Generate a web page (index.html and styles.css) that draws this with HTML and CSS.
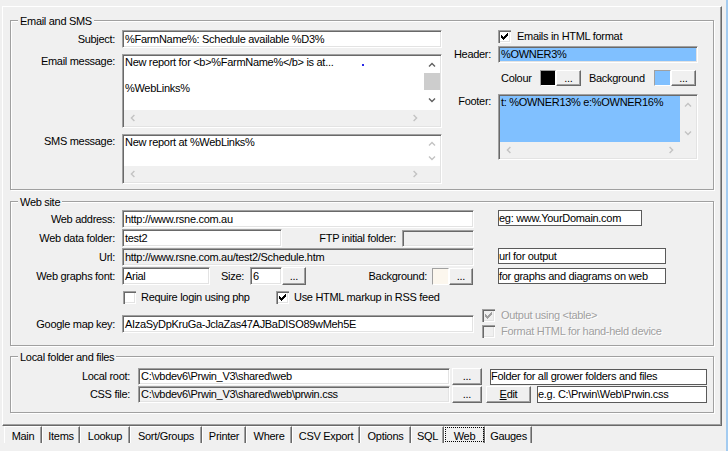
FILE: index.html
```html
<!DOCTYPE html>
<html>
<head>
<meta charset="utf-8">
<title>Web settings</title>
<link rel="stylesheet" href="styles.css">
</head>
<body>
<svg class="defs" width="0" height="0" aria-hidden="true">
  <defs>
    <symbol id="au" viewBox="0 0 8 5"><path d="M1 4.4L4 1.4L7 4.4" fill="none" stroke="currentColor" stroke-width="1.4"/></symbol>
    <symbol id="ad" viewBox="0 0 8 5"><path d="M1 0.6L4 3.6L7 0.6" fill="none" stroke="currentColor" stroke-width="1.4"/></symbol>
    <symbol id="al" viewBox="0 0 5 8"><path d="M4.4 1L1.4 4L4.4 7" fill="none" stroke="currentColor" stroke-width="1.4"/></symbol>
    <symbol id="ar" viewBox="0 0 5 8"><path d="M0.6 1L3.6 4L0.6 7" fill="none" stroke="currentColor" stroke-width="1.4"/></symbol>
    <symbol id="chk" viewBox="0 0 13 13"><path d="M3 5h1v3h-1z M4 6h1v3h-1z M5 7h1v3h-1z M6 6h1v3h-1z M7 5h1v3h-1z M8 4h1v3h-1z M9 3h1v3h-1z" fill="currentColor"/></symbol>
  </defs>
</svg>
<div class="window">
  <div class="panel">

    <div class="group g-email">
      <span class="legend">Email and SMS</span>
      <div class="col email-left">
        <div class="row">
          <span class="lbl">Subject:</span>
          <div class="field w320 h18">%FarmName%: Schedule available %D3%</div>
        </div>
        <div class="row top mt6">
          <span class="lbl pt1">Email message:</span>
          <div class="memo w320 h74">
            <div class="memo-text">New report for &lt;b&gt;%FarmName%&lt;/b&gt; is at...<br><br>%WebLinks%<i class="dot"></i></div>
            <div class="vscroll">
              <span class="sb"><svg class="ah"><use href="#au"/></svg></span>
              <span class="thumb"></span>
              <span class="sb grow"><svg class="ah"><use href="#ad"/></svg></span>
            </div>
            <div class="hscroll">
              <span class="sbh off"><svg class="av"><use href="#al"/></svg></span>
              <span class="grow"></span>
              <span class="sbh off"><svg class="av"><use href="#ar"/></svg></span>
            </div>
            <div class="corner"></div>
          </div>
        </div>
        <div class="row top mt6">
          <span class="lbl pt1">SMS message:</span>
          <div class="memo w320 h50">
            <div class="memo-text">New report at %WebLinks%</div>
            <div class="vscroll">
              <span class="sb off grow"><svg class="ah"><use href="#au"/></svg></span>
              <span class="sb off grow"><svg class="ah"><use href="#ad"/></svg></span>
            </div>
            <div class="hscroll">
              <span class="sbh off"><svg class="av"><use href="#al"/></svg></span>
              <span class="grow"></span>
              <span class="sbh off"><svg class="av"><use href="#ar"/></svg></span>
            </div>
            <div class="corner"></div>
          </div>
        </div>
      </div>

      <div class="col email-right">
        <div class="row h13">
          <span class="lbl2"></span>
          <span class="cb"><svg class="ck"><use href="#chk"/></svg></span>
          <span class="cbt m6">Emails in HTML format</span>
        </div>
        <div class="row mt3">
          <span class="lbl2">Header:</span>
          <div class="field blue w200 h17">%OWNER3%</div>
        </div>
        <div class="row mt7 h16">
          <span class="lbl2"></span>
          <span class="clab">Colour</span>
          <span class="swatch black w16"></span>
          <span class="btn w25 h16">...</span>
          <span class="blab">Background</span>
          <span class="swatch lblue w17"></span>
          <span class="btn w25 h16">...</span>
        </div>
        <div class="row top mt8">
          <span class="lbl2 pt1">Footer:</span>
          <div class="memo w200 h66">
            <div class="memo-text blue">t: %OWNER13% e:%OWNER16%</div>
            <div class="vscroll gray">
              <span class="sb off"><svg class="ah"><use href="#au"/></svg></span>
              <span class="grow"></span>
              <span class="sb off"><svg class="ah"><use href="#ad"/></svg></span>
            </div>
            <div class="hscroll">
              <span class="sbh off"><svg class="av"><use href="#al"/></svg></span>
              <span class="grow"></span>
              <span class="sbh off"><svg class="av"><use href="#ar"/></svg></span>
            </div>
            <div class="corner"></div>
          </div>
        </div>
      </div>
    </div>

    <div class="group g-web">
      <span class="legend">Web site</span>
      <div class="col web-left">
        <div class="row h18">
          <span class="lbl">Web address:</span>
          <div class="field w352 h18">http://www.rsne.com.au</div>
        </div>
        <div class="row h18 mt1">
          <span class="lbl">Web data folder:</span>
          <div class="field w160 h18">test2</div>
          <span class="ftp">FTP initial folder:</span>
          <div class="field dis w72 h17"></div>
        </div>
        <div class="row h18 mt1">
          <span class="lbl">Url:</span>
          <div class="field dis w352 h18">http://www.rsne.com.au/test2/Schedule.htm</div>
        </div>
        <div class="row h18 mt1">
          <span class="lbl">Web graphs font:</span>
          <div class="field w88 h18">Arial</div>
          <span class="size">Size:</span>
          <div class="field w32 h18">6</div>
          <span class="btn w24 h18">...</span>
          <span class="bg2">Background:</span>
          <span class="swatch cream w17 h17"></span>
          <span class="btn w24 h17">...</span>
        </div>
        <div class="row h13 mt6">
          <span class="lbl"></span>
          <span class="chk-item">
            <span class="cb"></span><span class="cbt">Require login using php</span>
          </span>
          <span class="chk-item">
            <span class="cb"><svg class="ck"><use href="#chk"/></svg></span><span class="cbt">Use HTML markup in RSS feed</span>
          </span>
        </div>
        <div class="row h18 mt11">
          <span class="lbl">Google map key:</span>
          <div class="field w352 h18">AIzaSyDpKruGa-JclaZas47AJBaDISO89wMeh5E</div>
        </div>
      </div>
      <div class="col web-right">
        <div class="box w144 h16">eg: www.YourDomain.com</div>
        <div class="box w168 h16 mt22">url for output</div>
        <div class="box w168 h16 mt4">for graphs and diagrams on web</div>
        <div class="row h13 mt25 off-row">
          <span class="cb dis"><svg class="ck"><use href="#chk"/></svg></span>
          <span class="cbt m6">Output using &lt;table&gt;</span>
        </div>
        <div class="row h13 mt3 off-row">
          <span class="cb dis"></span>
          <span class="cbt m6">Format HTML for hand-held device</span>
        </div>
      </div>
    </div>

    <div class="group g-local">
      <span class="legend">Local folder and files</span>
      <div class="row h17">
        <span class="lbl3">Local root:</span>
        <div class="field w312 h17">C:\vbdev6\Prwin_V3\shared\web</div>
        <span class="btn w30 h17 ml2">...</span>
        <div class="box w217 h16 ml8">Folder for all grower folders and files</div>
      </div>
      <div class="row h17 mt1">
        <span class="lbl3">CSS file:</span>
        <div class="field dis w312 h17">C:\vbdev6\Prwin_V3\shared\web\prwin.css</div>
        <span class="btn w30 h17 ml2">...</span>
        <span class="btn w45 h17 ml4"><u>E</u>dit</span>
        <div class="box w170 h17 ml6">e.g. C:\Prwin\Web\Prwin.css</div>
      </div>
    </div>

  </div>

  <div class="tabs">
    <span class="tab">Main</span>
    <span class="tab">Items</span>
    <span class="tab">Lookup</span>
    <span class="tab">Sort/Groups</span>
    <span class="tab">Printer</span>
    <span class="tab">Where</span>
    <span class="tab">CSV Export</span>
    <span class="tab">Options</span>
    <span class="tab">SQL</span>
    <span class="tab sel">Web</span>
    <span class="tab">Gauges</span>
  </div>
</div>
</body>
</html>
```

FILE: styles.css
```css
* { box-sizing: border-box; margin: 0; padding: 0; }
html, body { width: 728px; height: 451px; overflow: hidden; }
body {
  background: #a3cbf0;
  font-family: "Liberation Sans", Arial, sans-serif;
  font-size: 11px;
  line-height: 13px;
  letter-spacing: -0.3px;
  color: #000;
}
.defs { position: absolute; width: 0; height: 0; overflow: hidden; }

.window { width: 726px; height: 451px; background: #f0f0f0; padding-top: 6px; }
.panel {
  margin-left: 2px;
  width: 720px;
  height: 420px;
  border: 1px solid;
  border-color: #fff #696969 #696969 #fff;
  box-shadow: inset -1px -1px 0 #a0a0a0;
  padding: 13px 0 0 7px;
}

/* group boxes */
.group {
  position: relative;
  width: 704px;
  border: 1px solid #a0a0a0;
  box-shadow: inset 1px 1px 0 #fff, 1px 1px 0 #fff;
  display: flex;
  align-items: flex-start;
}
.g-email { height: 170px; padding-top: 9px; }
.g-web { height: 145px; margin-top: 11px; padding-top: 8px; }
.g-local { height: 57px; margin-top: 10px; padding-top: 11px; flex-direction: column; }
.legend {
  position: absolute;
  top: -6px;
  left: 7px;
  padding: 0 2px;
  background: #f0f0f0;
  white-space: nowrap;
}

/* layout helpers */
.col { display: flex; flex-direction: column; }
.row { display: flex; align-items: center; }
.row.top { align-items: flex-start; }
.grow { flex: 1; }
.lbl { width: 104px; margin-right: 7px; text-align: right; flex-shrink: 0; white-space: nowrap; }
.lbl2 { width: 49px; margin-right: 7px; text-align: right; flex-shrink: 0; white-space: nowrap; }
.lbl3 { width: 119px; margin-right: 8px; text-align: right; flex-shrink: 0; white-space: nowrap; }
.pt1 { padding-top: 1px; }
.mt1 { margin-top: 1px; } .mt3 { margin-top: 3px; } .mt4 { margin-top: 4px; }
.mt6 { margin-top: 6px; } .mt7 { margin-top: 7px; } .mt8 { margin-top: 8px; }
.mt11 { margin-top: 11px; } .mt22 { margin-top: 22px; } .mt25 { margin-top: 25px; }
.ml2 { margin-left: 2px; } .ml4 { margin-left: 4px; } .ml6 { margin-left: 6px; } .ml8 { margin-left: 8px; }

.w16 { width: 16px; } .w17 { width: 17px; } .w24 { width: 24px; } .w25 { width: 25px; }
.w30 { width: 30px; } .w32 { width: 32px; } .w45 { width: 45px; } .w72 { width: 72px; }
.w88 { width: 88px; } .w144 { width: 144px; } .w160 { width: 160px; } .w168 { width: 168px; }
.w170 { width: 170px; } .w200 { width: 200px; } .w217 { width: 217px; } .w312 { width: 312px; }
.w320 { width: 320px; } .w352 { width: 352px; }
.h13 { height: 13px; } .h16 { height: 16px; } .h17 { height: 17px; } .h18 { height: 18px; }
.h50 { height: 50px; } .h66 { height: 66px; } .h74 { height: 74px; }

/* sunken text fields */
.field {
  display: flex;
  align-items: center;
  flex-shrink: 0;
  background: #fff;
  border: 1px solid;
  border-color: #a0a0a0 #fff #fff #a0a0a0;
  box-shadow: inset 1px 1px 0 #696969, inset -1px -1px 0 #e3e3e3;
  padding-left: 2px;
  white-space: nowrap;
  overflow: hidden;
}
.field.dis { background: #f0f0f0; }
.blue { background: #80c0ff; }
.field.blue { background: #80c0ff; }

/* multi-line memo with scrollbars */
.memo {
  display: grid;
  grid-template-columns: 1fr 16px;
  grid-template-rows: 1fr 16px;
  flex-shrink: 0;
  border: 1px solid;
  border-color: #a0a0a0 #fff #fff #a0a0a0;
  box-shadow: inset 1px 1px 0 #696969, inset -1px -1px 0 #e3e3e3;
  padding: 1px;
  background: #f0f0f0;
}
.memo-text {
  position: relative;
  background: #fff;
  padding-left: 1px;
  white-space: nowrap;
  overflow: hidden;
}
.memo-text.blue { background: #80c0ff; }
.dot { position: absolute; left: 238px; top: 8px; width: 2px; height: 2px; background: #2a2ae8; }
.vscroll { display: flex; flex-direction: column; background: #fff; }
.vscroll.gray { background: #f0f0f0; }
.hscroll { display: flex; background: #f0f0f0; }
.corner { background: #f0f0f0; }
.sb { display: flex; align-items: center; justify-content: center; height: 17px; color: #606060; }
.sb.grow { height: auto; }
.sbh { display: flex; align-items: center; justify-content: center; width: 17px; color: #606060; }
.off { color: #c3c3c3; }
.thumb { height: 17px; background: #cdcdcd; }
.ah { width: 8px; height: 5px; }
.av { width: 5px; height: 8px; }

/* checkbox */
.cb {
  display: block;
  width: 13px;
  height: 13px;
  flex-shrink: 0;
  background: #fff;
  color: #000;
  box-shadow: inset 1px 1px 0 #a0a0a0, inset 2px 2px 0 #696969, inset -1px -1px 0 #fff, inset -2px -2px 0 #e3e3e3;
}
.cb.dis { background: #f0f0f0; color: #a0a0a0; }
.ck { display: block; width: 13px; height: 13px; }
.cbt { margin-left: 5px; white-space: nowrap; }
.cbt.m6 { margin-left: 6px; }
.off-row .cbt { color: #a0a0a0; text-shadow: 1px 1px 0 #fff; }
.chk-item { display: flex; align-items: center; width: 152px; margin-left: 1px; }

/* raised buttons */
.btn {
  display: flex;
  align-items: center;
  justify-content: center;
  flex-shrink: 0;
  background: #f0f0f0;
  border: 1px solid;
  border-color: #fff #696969 #696969 #fff;
  box-shadow: inset -1px -1px 0 #a0a0a0;
  white-space: nowrap;
}

/* colour swatches */
.swatch {
  display: block;
  flex-shrink: 0;
  height: 16px;
  border: 1px solid;
  border-color: #a0a0a0 #fff #fff #a0a0a0;
}
.swatch.h17 { height: 17px; }
.black { background: #000; }
.lblue { background: #80c0ff; }
.cream { background: #fcf7ee; }
.clab { width: 42px; padding-left: 3px; flex-shrink: 0; }
.blab { width: 65px; margin-left: 8px; flex-shrink: 0; white-space: nowrap; }

/* flat bordered labels */
.box {
  display: flex;
  align-items: center;
  flex-shrink: 0;
  background: #fff;
  border: 1px solid #5a5a5a;
  white-space: nowrap;
  overflow: hidden;
}

/* web-site specifics */
.web-right { margin-left: 8px; }
.web-right .box { margin-left: 16px; }
.ftp { width: 114px; margin-right: 6px; text-align: right; flex-shrink: 0; white-space: nowrap; }
.size { width: 40px; padding-left: 11px; flex-shrink: 0; }
.bg2 { width: 126px; padding-right: 5px; text-align: right; flex-shrink: 0; white-space: nowrap; }

/* tab strip */
.tabs {
  display: grid;
  grid-template-columns: 38px 38px 50px 72px 44px 46px 68px 51px 33px 41px 47px;
  margin-left: 4px;
  width: max-content;
}
.tab {
  height: 17px;
  padding-top: 3px;
  text-align: center;
  white-space: nowrap;
  border-top: 1px solid #fff;
  border-left: 1px solid #fff;
  border-right: 1px solid #696969;
  box-shadow: inset -1px 0 0 #a0a0a0;
}
.tab.sel { outline: 1px dotted #000; outline-offset: -2px; }
```
